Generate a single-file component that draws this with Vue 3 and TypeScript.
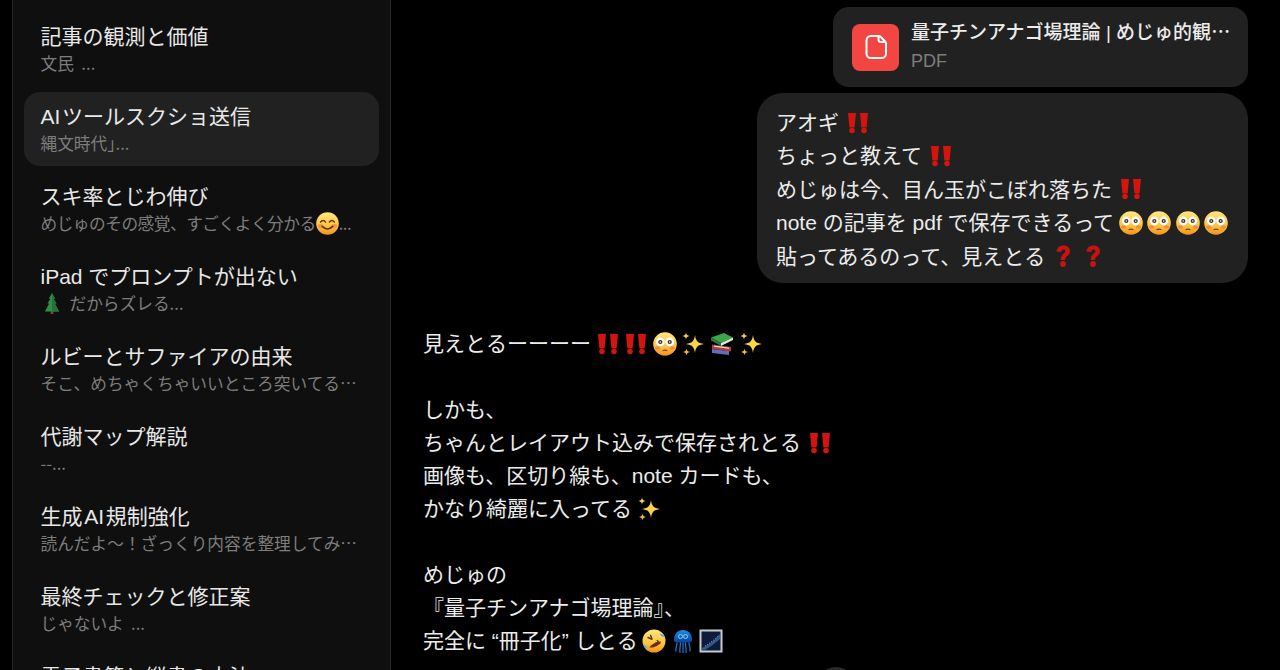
<template>
  <svg class="defs" width="0" height="0" aria-hidden="true">
    <defs>
      <linearGradient id="face" x1="0" y1="0" x2="0" y2="1">
        <stop offset="0" stop-color="#ffe680" />
        <stop offset="0.6" stop-color="#fcc441" />
        <stop offset="1" stop-color="#f0921f" />
      </linearGradient>
      <linearGradient id="jelly" x1="0" y1="0" x2="0" y2="1">
        <stop offset="0" stop-color="#1c8fe8" />
        <stop offset="1" stop-color="#0a3f96" />
      </linearGradient>
      <symbol id="e-bang" viewBox="0 0 24 24">
        <path d="M2 2h8l-1.400 14.500H3.400zM14 2h8l-1.400 14.500h-5.200z" fill="#d3150e" />
        <circle cx="6" cy="19.500" r="2.800" fill="#d3150e" />
        <circle cx="18" cy="19.500" r="2.800" fill="#d3150e" />
      </symbol>
      <symbol id="e-q" viewBox="0 0 24 24">
        <path d="M5.500 7.500C6 3.500 9 1.500 12.500 1.500c4 0 6.500 2.300 6.500 5.600 0 2.600-1.500 3.900-3 5.100-1.300 1-1.900 1.800-1.900 3.800H9.800c0-3.400 1-4.800 2.700-6.200 1.200-1 1.800-1.600 1.800-2.500 0-1-.7-1.700-1.800-1.700-1.200 0-2 .8-2.300 2.400z" fill="#c8140f" />
        <circle cx="12" cy="20" r="2.900" fill="#c8140f" />
      </symbol>
      <symbol id="e-flushed" viewBox="0 0 24 24">
        <circle cx="12" cy="12" r="11.800" fill="url(#face)" />
        <ellipse cx="4.500" cy="16" rx="2.800" ry="1.800" fill="#ec5f42" opacity=".5" />
        <ellipse cx="19.500" cy="16" rx="2.800" ry="1.800" fill="#ec5f42" opacity=".5" />
        <circle cx="7.300" cy="10" r="4.400" fill="#fff" />
        <circle cx="16.700" cy="10" r="4.400" fill="#fff" />
        <circle cx="7.300" cy="10" r="2.100" fill="#4b2c12" />
        <circle cx="16.700" cy="10" r="2.100" fill="#4b2c12" />
        <circle cx="7.300" cy="10" r=".8" fill="#fff" />
        <circle cx="16.700" cy="10" r=".8" fill="#fff" />
        <path d="M10.200 18.600q1.800-1 3.600 0" stroke="#7a3d10" stroke-width="1.200" fill="none" stroke-linecap="round" />
      </symbol>
      <symbol id="e-smile" viewBox="0 0 24 24">
        <circle cx="12" cy="12" r="11.800" fill="url(#face)" />
        <ellipse cx="4.800" cy="14.500" rx="3" ry="1.900" fill="#ee6a4a" opacity=".55" />
        <ellipse cx="19.200" cy="14.500" rx="3" ry="1.900" fill="#ee6a4a" opacity=".55" />
        <path d="M4.800 10.500q2.700-3.400 5.200 0M14 10.500q2.700-3.400 5.200 0" stroke="#5b3210" stroke-width="1.500" fill="none" stroke-linecap="round" />
        <path d="M6.500 15q5.500 5.500 11 0" stroke="#5b3210" stroke-width="1.500" fill="none" stroke-linecap="round" />
      </symbol>
      <symbol id="e-rofl" viewBox="0 0 24 24">
        <circle cx="12" cy="12" r="11.500" fill="url(#face)" />
        <path d="M6 8.500l4 1.800-1.400-4M14 14l3.800.5-2.500-3" stroke="#5b3210" stroke-width="1.400" fill="none" stroke-linecap="round" stroke-linejoin="round" />
        <path d="M7.500 18.500C12 19 17.500 16.500 19 12.500 14 13 10 14.500 7.500 18.500z" fill="#6d2d12" />
        <path d="M17.500 4.500q3.500 0 5 3-3 1.500-5-3zM1 15q1.500 4 4 4.500 1-2.500-4-4.500z" fill="#4fb4ee" />
      </symbol>
      <symbol id="e-sparkles" viewBox="0 0 24 24">
        <path d="M14 3c.9 6.200 2.800 8.100 9 9-6.200.9-8.100 2.800-9 9-.9-6.200-2.800-8.100-9-9 6.200-.9 8.100-2.800 9-9z" fill="#fbd24c" />
        <path d="M5 .5c.4 2.300 1.200 3.100 3.500 3.500C6.200 4.400 5.400 5.200 5 7.500 4.600 5.200 3.800 4.400 1.500 4 3.800 3.600 4.600 2.800 5 .5z" fill="#fbd24c" />
        <path d="M5.500 16.500c.4 2.300 1.100 3 3.500 3.500-2.400.5-3.100 1.200-3.500 3.500-.4-2.300-1.100-3-3.500-3.500 2.400-.5 3.100-1.200 3.500-3.500z" fill="#f6b93a" />
      </symbol>
      <symbol id="e-books" viewBox="0 0 24 24">
        <path d="M2 17l17 2v4L2 21z" fill="#5e6fb2" />
        <path d="M2 12.500l19 2.500v4.500L2 17z" fill="#b23a4c" />
        <path d="M4 13.500l15 2v1.200L4 14.800z" fill="#e9e2d0" />
        <path d="M1 5.500L14 1l9 4.500-12 5.500z" fill="#3fa34d" />
        <path d="M1 5.500l10 5.500v3L1 8.500z" fill="#2b7d3a" />
        <path d="M11 11l12-5.500v2.500L11 14z" fill="#dfe6d6" />
      </symbol>
      <symbol id="e-tree" viewBox="0 0 24 24">
        <rect x="10.500" y="20" width="3" height="4" fill="#7c4a22" />
        <path d="M12 0l3.600 6.500h-1.800l3.400 5.500h-2l5 9H3.800l5-9h-2l3.400-5.500H8.400z" fill="#2f8f46" />
        <path d="M12 0l3.600 6.500h-1.800l3.400 5.500h-2l5 9H12z" fill="#247338" />
      </symbol>
      <symbol id="e-jelly" viewBox="0 0 24 24">
        <path d="M3 11C3 4.500 7 1 12 1s9 3.500 9 10c0 1.800-1.500 2.500-3 2.500H6C4.500 13.500 3 12.800 3 11z" fill="url(#jelly)" />
        <path d="M7.500 7.500a2 2 0 1 1 4 0 2 2 0 1 1-4 0M12.500 7.500a2 2 0 1 1 4 0 2 2 0 1 1-4 0" stroke="#7fd0ff" stroke-width="1" fill="none" />
        <path d="M6 14c0 3-1.500 4-1 8M9.500 14c0 3-1 5-.5 9.500M12 14v10M14.500 14c0 3 1 5 .5 9.500M18 14c0 3 1.500 4 1 8" stroke="#1a74cc" stroke-width="1.300" fill="none" stroke-linecap="round" />
      </symbol>
      <symbol id="e-galaxy" viewBox="0 0 24 24">
        <rect x="0.500" y="0.500" width="23" height="23" fill="#c8ccd2" />
        <rect x="2.500" y="2.500" width="19" height="19" fill="#0d1c3a" />
        <path d="M3 19Q12 15 21 5v5Q13 17 6 21H3z" fill="#3e6ea8" opacity=".75" />
        <path d="M6 17Q13 13 19 7" stroke="#9fc4e8" stroke-width="1" stroke-dasharray="1 1.500" fill="none" />
      </symbol>
    </defs>
  </svg>

  <div class="page">
    <aside class="sidebar">
      <div
        v-for="(chat, i) in chats"
        :key="i"
        class="chat"
        :class="{ active: chat.active }"
      >
        <div class="chat-title">{{ chat.title }}</div>
        <div class="chat-sub" :class="{ tight: chat.emoji }">
          <svg v-if="chat.lead" class="emo lead"><use :href="'#e-' + chat.lead" /></svg>
          <span>{{ chat.sub }}</span>
          <svg v-if="chat.emoji" class="emo"><use :href="'#e-' + chat.emoji" /></svg>
          <span v-if="chat.tail">{{ chat.tail }}</span>
        </div>
      </div>
    </aside>

    <main class="thread">
      <div class="file-card">
        <div class="file-icon">
          <svg width="26" height="28" viewBox="0 0 26 28" fill="none">
            <path
              d="M8 3h7.500c.8 0 1.500.3 2 .8l4.700 4.700c.5.500.8 1.200.8 2V20.500c0 2.500-2 4.500-4.500 4.500H8c-2.500 0-4.500-2-4.500-4.500v-13C3.500 5 5.500 3 8 3z"
              stroke="#fff"
              stroke-width="2"
            />
            <path d="M15.500 3v3.500c0 1.400 1.100 2.500 2.500 2.500h4.500" stroke="#fff" stroke-width="2" />
          </svg>
        </div>
        <div class="file-meta">
          <div class="file-name">量子チンアナゴ場理論 | めじゅ的観<span class="cjk">…</span></div>
          <div class="file-type">PDF</div>
        </div>
      </div>

      <div class="bubble">
        <div v-for="(line, i) in userLines" :key="i" class="line">
          <template v-for="(part, j) in line" :key="j">
            <svg v-if="part.startsWith('#')" class="emo big" :class="part.slice(1)"><use :href="'#e-' + part.slice(1)" /></svg>
            <span v-else>{{ part }}</span>
          </template>
        </div>
      </div>

      <div class="reply">
        <div v-for="(line, i) in replyLines" :key="i" class="line">
          <template v-for="(part, j) in line" :key="j">
            <svg v-if="part.startsWith('#')" class="emo big" :class="part.slice(1)"><use :href="'#e-' + part.slice(1)" /></svg>
            <span v-else>{{ part }}</span>
          </template>
        </div>
      </div>

      <div class="scroll-btn"></div>
    </main>
  </div>
</template>

<script setup lang="ts">
interface Chat {
  title: string
  sub: string
  active?: boolean
  lead?: string
  emoji?: string
  tail?: string
}

const chats: Chat[] = [
  { title: '記事の観測と価値', sub: '文民  ...' },
  { title: 'AI\u200aツールスクショ送信', sub: '縄文時代｣...', active: true },
  { title: 'スキ率とじわ伸び', sub: 'めじゅのその感覚、すごくよく分かる', emoji: 'smile', tail: '...' },
  { title: 'iPad でプロンプトが出ない', sub: 'だからズレる...', lead: 'tree' },
  { title: 'ルビーとサファイアの由来', sub: 'そこ、めちゃくちゃいいところ突いてる…' },
  { title: '代謝マップ解説', sub: '--...' },
  { title: '生成\u200aAI\u200a規制強化', sub: '読んだよ〜！ざっくり内容を整理してみ…' },
  { title: '最終チェックと修正案', sub: 'じゃないよ  ...' },
  { title: '電子書籍と縦書の方法', sub: '' }
]

// '#' で始まる要素は絵文字
const userLines: string[][] = [
  ['アオギ', '#bang'],
  ['ちょっと教えて', '#bang'],
  ['めじゅは今、目ん玉がこぼれ落ちた', '#bang'],
  ['note の記事を pdf で保存できるって', '#flushed', '#flushed', '#flushed', '#flushed'],
  ['貼ってあるのって、見えとる', '#q', '#q']
]

const replyLines: string[][] = [
  ['見えとるーーーー', '#bang', '#bang', '#flushed', '#sparkles', '#books', '#sparkles'],
  [],
  ['しかも、'],
  ['ちゃんとレイアウト込みで保存されとる', '#bang'],
  ['画像も、区切り線も、note カードも、'],
  ['かなり綺麗に入ってる', '#sparkles'],
  [],
  ['めじゅの'],
  ['『量子チンアナゴ場理論』、'],
  ['完全に “冊子化” しとる', '#rofl', '#jelly', '#galaxy']
]
</script>

<style>
html,
body {
  margin: 0;
  background: #000;
  overflow: hidden;
}
</style>

<style scoped>
.defs {
  position: absolute;
}

.page {
  display: flex;
  width: 1280px;
  height: 670px;
  overflow: hidden;
  background: #000;
  color: #ececec;
  font-family: "Liberation Sans", "Noto Sans CJK JP", sans-serif;
}

.sidebar {
  flex: none;
  box-sizing: border-box;
  width: 379px;
  height: 670px;
  margin-left: 12px;
  padding: 12px 11px 0;
  display: flex;
  flex-direction: column;
  gap: 6px;
  overflow: hidden;
  background: #0f0f0f;
  border-left: 1px solid #262626;
  border-right: 1px solid #262626;
}

.chat {
  flex: none;
  box-sizing: border-box;
  height: 74px;
  padding: 10px 16.5px 0;
  border-radius: 16px;
}

.chat.active {
  background: #212121;
}

.chat-title {
  height: 30px;
  font-size: 21px;
  line-height: 30px;
  color: #e8e8e8;
  white-space: nowrap;
}

.chat-sub {
  display: flex;
  align-items: center;
  height: 24px;
  margin-top: -1px;
  font-family: "Noto Sans CJK JP", sans-serif;
  font-size: 16.7px;
  line-height: 24px;
  color: #7d7d7d;
  white-space: pre;
}

.chat-sub.tight {
  letter-spacing: -0.5px;
}

.emo {
  flex: none;
  width: 23px;
  height: 23px;
}

.emo.lead {
  width: 22px;
  height: 21px;
  margin-right: 7px;
}

.thread {
  position: relative;
  flex: 1;
  display: flex;
  flex-direction: column;
  align-items: flex-end;
  padding: 7px 32px 0 32px;
  min-width: 0;
}

.file-card {
  display: flex;
  align-items: center;
  gap: 12px;
  box-sizing: border-box;
  width: 415px;
  height: 80px;
  padding: 0 19px;
  background: #212121;
  border-radius: 16px;
}

.file-icon {
  flex: none;
  display: flex;
  align-items: center;
  justify-content: center;
  width: 47px;
  height: 47px;
  background: #f24643;
  border-radius: 8px;
}

.file-meta {
  padding-bottom: 4px;
}

.file-name {
  font-size: 19px;
  line-height: 26px;
  font-weight: 500;
  color: #ececec;
  white-space: nowrap;
}

.cjk {
  font-family: "Noto Sans CJK JP", sans-serif;
}

.file-type {
  margin-top: 3px;
  font-size: 18px;
  line-height: 24px;
  color: #7d7d7d;
}

.bubble {
  box-sizing: border-box;
  width: 491px;
  height: 190px;
  margin-top: 6px;
  padding: 13px 19px 0;
  background: #212121;
  border-radius: 26px;
}

.line {
  display: flex;
  align-items: center;
  height: 33.4px;
  font-size: 21px;
  line-height: 33.4px;
  color: #ececec;
  white-space: nowrap;
}

.reply {
  align-self: flex-start;
  margin-top: 44px;
}

.reply .line {
  height: 33px;
  line-height: 33px;
}

.emo.big {
  width: 24px;
  height: 24px;
  margin-left: 4.6px;
}

.emo.bang {
  margin-left: 7px;
}

.reply .line:first-child .emo.bang {
  margin-left: 4.6px;
}

.emo.q {
  margin-left: 6px;
}

/* 下端の丸いスクロールボタン */
.scroll-btn {
  position: absolute;
  left: 50%;
  top: 667px;
  width: 40px;
  height: 40px;
  transform: translateX(-50%);
  background: #2a2a2a;
  border-radius: 50%;
}
</style>
